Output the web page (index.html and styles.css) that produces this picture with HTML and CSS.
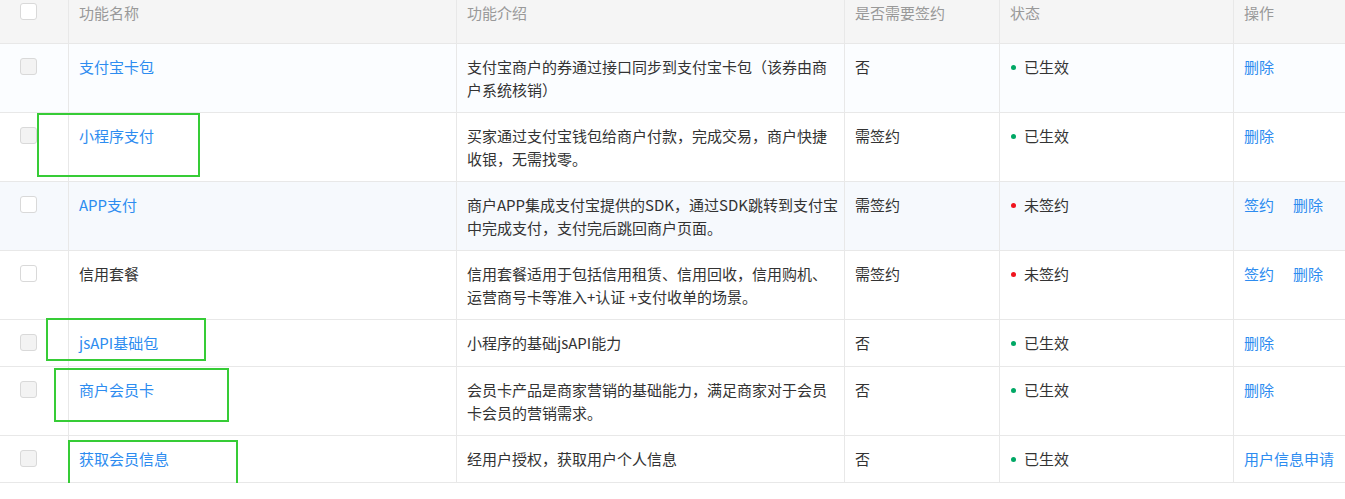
FILE: index.html
```html
<!DOCTYPE html>
<html lang="zh-CN">
<head>
    <meta charset="UTF-8">
    <title>功能列表</title>
    <link rel="stylesheet" href="styles.css">
</head>
<body>
    <div class="table-wrap">
        <table class="func-table">
            <colgroup>
                <col class="col-check">
                <col class="col-name">
                <col class="col-desc">
                <col class="col-sign">
                <col class="col-status">
                <col>
            </colgroup>
            <thead>
                <tr>
                    <th class="cell-check"><span class="checkbox"></span></th>
                    <th>功能名称</th>
                    <th>功能介绍</th>
                    <th>是否需要签约</th>
                    <th>状态</th>
                    <th>操作</th>
                </tr>
            </thead>
            <tbody>
                <tr class="row-hover">
                    <td class="cell-check"><span class="checkbox disabled"></span></td>
                    <td><a href="#">支付宝卡包</a></td>
                    <td>支付宝商户的券通过接口同步到支付宝卡包（该券由商户系统核销）</td>
                    <td>否</td>
                    <td><span class="dot on"></span>已生效</td>
                    <td class="ops"><a href="#">删除</a></td>
                </tr>
                <tr>
                    <td class="cell-check"><span class="checkbox disabled"></span></td>
                    <td><a href="#">小程序支付</a></td>
                    <td>买家通过支付宝钱包给商户付款，完成交易，商户快捷收银，无需找零。</td>
                    <td>需签约</td>
                    <td><span class="dot on"></span>已生效</td>
                    <td class="ops"><a href="#">删除</a></td>
                </tr>
                <tr class="row-stripe">
                    <td class="cell-check"><span class="checkbox"></span></td>
                    <td><a href="#">APP支付</a></td>
                    <td class="lines">商户APP集成支付宝提供的SDK，通过SDK跳转到支付宝<br>中完成支付，支付完后跳回商户页面。</td>
                    <td>需签约</td>
                    <td><span class="dot off"></span>未签约</td>
                    <td class="ops"><a href="#">签约</a><a href="#">删除</a></td>
                </tr>
                <tr>
                    <td class="cell-check"><span class="checkbox"></span></td>
                    <td>信用套餐</td>
                    <td class="lines">信用套餐适用于包括信用租赁、信用回收，信用购机、<br>运营商号卡等准入+认证 +支付收单的场景。</td>
                    <td>需签约</td>
                    <td><span class="dot off"></span>未签约</td>
                    <td class="ops"><a href="#">签约</a><a href="#">删除</a></td>
                </tr>
                <tr>
                    <td class="cell-check"><span class="checkbox disabled"></span></td>
                    <td><a href="#">jsAPI基础包</a></td>
                    <td>小程序的基础jsAPI能力</td>
                    <td>否</td>
                    <td><span class="dot on"></span>已生效</td>
                    <td class="ops"><a href="#">删除</a></td>
                </tr>
                <tr>
                    <td class="cell-check"><span class="checkbox disabled"></span></td>
                    <td><a href="#">商户会员卡</a></td>
                    <td>会员卡产品是商家营销的基础能力，满足商家对于会员卡会员的营销需求。</td>
                    <td>否</td>
                    <td><span class="dot on"></span>已生效</td>
                    <td class="ops"><a href="#">删除</a></td>
                </tr>
                <tr>
                    <td class="cell-check"><span class="checkbox disabled"></span></td>
                    <td><a href="#">获取会员信息</a></td>
                    <td>经用户授权，获取用户个人信息</td>
                    <td>否</td>
                    <td><span class="dot on"></span>已生效</td>
                    <td class="ops"><a href="#">用户信息申请</a></td>
                </tr>
            </tbody>
        </table>

        <!-- review marks drawn over the table -->
        <div class="mark mark-1"></div>
        <div class="mark mark-2"></div>
        <div class="mark mark-3"></div>
        <div class="mark mark-4"></div>
    </div>
</body>
</html>
```

FILE: styles.css
```css
body {
    margin: 0;
    background: #fff;
    font-family: "Noto Sans CJK SC", sans-serif;
    font-size: 15px;
    color: #333;
    overflow: hidden;
}
a { color: #2d8cf0; text-decoration: none; }

.table-wrap {
    position: relative;
    width: 1345px;
}

.func-table {
    width: 100%;
    table-layout: fixed;
    border-collapse: separate;
    border-spacing: 0;
}
.col-check { width: 69px; }
.col-name { width: 388px; }
.col-desc { width: 388px; }
.col-sign { width: 155px; }
.col-status { width: 234px; }

.func-table th,
.func-table td {
    box-sizing: border-box;
    border-right: 1px solid #e8e8e8;
    border-bottom: 1px solid #e8e8e8;
    line-height: 23px;
    text-align: left;
    vertical-align: top;
}
.func-table th:last-child,
.func-table td:last-child { border-right: none; }

.func-table th {
    background: #f5f5f5;
    color: #999;
    font-weight: normal;
    padding: 1px 10px 19px;
}
.func-table td {
    padding: 11px 10px 11px;
}
.func-table td.lines { white-space: nowrap; }
.func-table th.cell-check { padding: 3px 0 23px 20px; line-height: 0; }
.func-table td.cell-check { padding: 14px 0 15px 20px; line-height: 0; }

.row-hover td { background: #fbfdff; }
.row-stripe td { background: #f6f9fd; }

.checkbox {
    display: inline-block;
    width: 17px;
    height: 17px;
    box-sizing: border-box;
    border: 1px solid #d9d9d9;
    border-radius: 3px;
    background: #fff;
}
.checkbox.disabled { background: #f3f3f3; }

.dot {
    display: inline-block;
    width: 5px;
    height: 5px;
    border-radius: 50%;
    margin: 0 8px 0 1px;
    vertical-align: middle;
    position: relative;
    top: -1px;
}
.dot.on { background: #00a865; }
.dot.off { background: #f0141e; }

.ops { white-space: nowrap; }
.ops a + a { margin-left: 19px; }

/* green review marks */
.mark {
    position: absolute;
    border: 2px solid #36cc36;
    box-sizing: border-box;
}
.mark-1 { left: 37px; top: 113px; width: 163px; height: 64px; }
.mark-2 { left: 46px; top: 318px; width: 160px; height: 43px; }
.mark-3 { left: 54px; top: 368px; width: 175px; height: 54px; }
.mark-4 { left: 68px; top: 440px; width: 170px; height: 51px; }
```
